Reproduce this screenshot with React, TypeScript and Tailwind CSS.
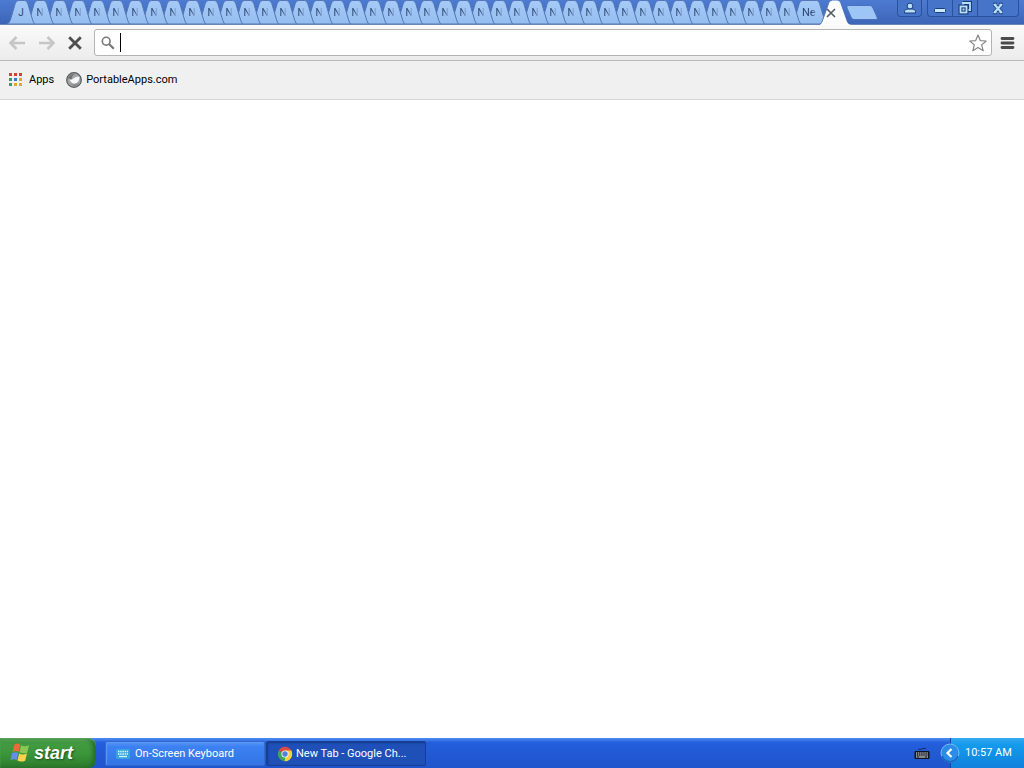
import { useState } from "react";
import type { ReactNode } from "react";

const tabs = ["J", ...Array.from({ length: 42 }, () => "N")];

const appColours = [
  "#d2402e", "#d2402e", "#d2402e",
  "#2f9e77", "#3c78c8", "#e3a52c",
  "#2f9e77", "#e3a52c", "#e3a52c",
];

function BackgroundTab({ label, index }: { label: string; index: number }) {
  const pitch = index < 10 ? "w-[19px]" : "w-[18px]";
  return (
    <li className={`relative h-6 shrink-0 ${pitch}`} style={{ zIndex: 60 - index }}>
      <button type="button" className="relative block h-6 w-7">
        <svg viewBox="0 0 28 24" className="absolute inset-0 h-6 w-7" aria-hidden="true">
          <path
            d="M0 24C2 23.500 3 21 4 18L7.500 6C8.500 2 10 .5 12 .5H17C19 .5 20.500 2 21.500 6L25 18C26 21 26.500 23.500 28 24Z"
            fill="url(#tabFill)"
            stroke="#5577b4"
            strokeWidth="1"
          />
        </svg>
        <span
          className={`relative ml-[10px] block w-2 pt-[2px] text-center text-[10px] leading-[22px] text-[#2c4672] ${
            index === 0 ? "" : "[mask-image:linear-gradient(to_right,black_45%,transparent_95%)]"
          }`}
        >
          {label}
        </span>
      </button>
    </li>
  );
}

function TabStrip() {
  return (
    <ul className="flex h-6 items-end pl-[7px]">
      {tabs.map((label, i) => (
        <BackgroundTab key={i} label={label} index={i} />
      ))}
      <li className="relative z-10 h-6 w-7 shrink-0">
        <button type="button" className="relative block h-6 w-9">
          <svg viewBox="0 0 36 24" className="absolute inset-0 h-6 w-9" aria-hidden="true">
            <path
              d="M0 24C2 23.500 3 21 4 18L7.500 6C8.500 2 10 .5 12 .5H25C27 .5 28 1.500 29 5L33 18C34 21 34.500 23.500 36 24Z"
              fill="url(#tabFill)"
              stroke="#5577b4"
            />
          </svg>
          <span className="relative ml-[11px] block w-4 pt-[2px] text-left text-[11px] leading-[22px] text-[#2c4672] [mask-image:linear-gradient(to_right,black_60%,transparent)]">
            Ne
          </span>
        </button>
      </li>
      <li className="relative z-[70] h-6 w-[27px] shrink-0">
        <svg viewBox="0 0 32 25" className="absolute top-0 left-0 h-[25px] w-8" aria-hidden="true">
          <path
            d="M0 25C2 24.500 3 22 4 19L9 5C10 1.500 11 .5 13 .5H18C20 .5 21 1.500 22 5L27 19C28 22 29 24.500 32 25Z"
            fill="#fbfcfd"
          />
          <path d="M0 24.500C2 24.500 3 22 4 19L9 5C10 1.500 11 .5 13 .5" fill="none" stroke="#5577b4" />
        </svg>
        <button type="button" aria-label="Close tab" className="relative mt-[7px] ml-[6px] block h-3 w-3">
          <svg viewBox="0 0 12 12" className="h-3 w-3" aria-hidden="true">
            <path d="M2 2L10 10M10 2L2 10" stroke="#555a60" strokeWidth="1.600" />
          </svg>
        </button>
      </li>
      <li className="mb-1 h-[15px] w-8 shrink-0">
        <button type="button" aria-label="Open a new tab" className="block h-[15px] w-8">
          <svg viewBox="0 0 32 15" className="h-[15px] w-8" aria-hidden="true">
            <path
              d="M2.500 .5H23C25 .5 26 1 27 3L31 12C31.500 14 31 14.500 30 14.500H8C6.500 14.500 5.500 13.500 5 12L1 3C.5 1.500 1 .5 2.500 .5Z"
              fill="#9dc5f5"
              stroke="#4a70bd"
            />
          </svg>
        </button>
      </li>
    </ul>
  );
}

function CaptionButton({ label, className, children }: { label: string; className: string; children: ReactNode }) {
  return (
    <button
      type="button"
      aria-label={label}
      className={`flex h-[17px] items-center justify-center border-b border-[#2c509a] bg-[#4674c9] ${className}`}
    >
      {children}
    </button>
  );
}

function WindowControls() {
  return (
    <div className="flex items-start pr-[5px]">
      <CaptionButton label="Switch person" className="w-[25px] rounded-b border-x">
        <svg viewBox="0 0 14 14" className="h-[14px] w-[14px]" aria-hidden="true">
          <path d="M1.500 12V10.500C1.500 8.800 3.500 8.300 5 8H9C10.500 8.300 12.500 8.800 12.500 10.500V12Z" fill="#b9e0fb" stroke="#1b3b7a" />
          <circle cx="7" cy="5" r="2.900" fill="#b9e0fb" stroke="#1b3b7a" />
        </svg>
      </CaptionButton>
      <div className="ml-[5px] flex">
        <CaptionButton label="Minimize" className="w-[26px] rounded-bl border-x">
          <svg viewBox="0 0 14 14" className="h-[14px] w-[14px]" aria-hidden="true">
            <rect x="1.500" y="7.500" width="11" height="4" rx="1" fill="#c8e9ff" stroke="#1b3b7a" />
          </svg>
        </CaptionButton>
        <CaptionButton label="Restore" className="w-[25px] border-r">
          <svg viewBox="0 0 14 14" className="h-[14px] w-[14px]" aria-hidden="true">
            <path d="M5 2H12V9H10" fill="none" stroke="#1b3b7a" strokeWidth="4" />
            <path d="M5 5V2H12V9H10" fill="none" stroke="#b9e0fb" strokeWidth="1.800" />
            <rect x="2.500" y="5.500" width="6" height="6" fill="none" stroke="#1b3b7a" strokeWidth="4" />
            <rect x="2.500" y="5.500" width="6" height="6" fill="#1b3b7a" stroke="#b9e0fb" strokeWidth="1.800" />
            <rect x="4.500" y="7.500" width="2" height="2" fill="#b9e0fb" />
          </svg>
        </CaptionButton>
        <CaptionButton label="Close" className="w-[41px] rounded-br border-r">
          <svg viewBox="0 0 14 14" className="h-[14px] w-[14px]" aria-hidden="true">
            <path d="M3.500 3.500L10.500 11.500M10.500 3.500L3.500 11.500M2 3.500H6M8 3.500H12M2 11.500H6M8 11.500H12" stroke="#1b3b7a" strokeWidth="3.600" />
            <path d="M3.500 3.500L10.500 11.500M10.500 3.500L3.500 11.500" stroke="#b9e0fb" strokeWidth="2.200" />
            <path d="M2.500 3.500H5.500M8.500 3.500H11.500M2.500 11.500H5.500M8.500 11.500H11.500" stroke="#b9e0fb" strokeWidth="1.400" />
          </svg>
        </CaptionButton>
      </div>
    </div>
  );
}

function ArrowIcon({ flipped }: { flipped?: boolean }) {
  return (
    <svg viewBox="0 0 18 16" className="h-4 w-[18px]" aria-hidden="true">
      <path
        d={flipped ? "M1 8H15M9.500 2L15.500 8L9.500 14" : "M17 8H3M8.500 2L2.500 8L8.500 14"}
        fill="none"
        stroke="#c6c6c6"
        strokeWidth="2.600"
      />
    </svg>
  );
}

function Toolbar() {
  const [address, setAddress] = useState("");
  return (
    <div className="flex h-9 items-center border-b border-[#b9b9b9] bg-linear-to-b from-[#fafafa] to-[#ececec] pr-2 pl-2">
      <button type="button" aria-label="Back" className="mr-3 block">
        <ArrowIcon />
      </button>
      <button type="button" aria-label="Forward" className="mr-3 block">
        <ArrowIcon flipped />
      </button>
      <button type="button" aria-label="Stop loading" className="mr-3 block">
        <svg viewBox="0 0 14 14" className="h-[14px] w-[14px]" aria-hidden="true">
          <path d="M1.200 1.200L12.800 12.800M12.800 1.200L1.200 12.800" stroke="#4e4e4e" strokeWidth="2.800" />
        </svg>
      </button>
      <div className="flex h-[27px] min-w-0 grow items-center rounded-[3px] border border-[#b4b4b4] bg-white pr-1 pl-[6px]">
        <svg viewBox="0 0 14 14" className="mr-[5px] h-[14px] w-[14px] shrink-0" aria-hidden="true">
          <circle cx="5.200" cy="5.200" r="3.900" fill="none" stroke="#777" strokeWidth="1.600" />
          <path d="M8.300 8.300L12.800 12.800" stroke="#777" strokeWidth="2.200" />
        </svg>
        <span className="h-[19px] w-px shrink-0 bg-black" />
        <input
          type="text"
          aria-label="Address and search bar"
          value={address}
          onChange={(e) => setAddress(e.target.value)}
          className="h-5 min-w-0 grow bg-transparent text-sm outline-none"
        />
        <button type="button" aria-label="Bookmark this page" className="block shrink-0">
          <svg viewBox="0 0 18 18" className="h-[18px] w-[18px]" aria-hidden="true">
            <path
              d="M9 1L11.300 6.600L17.200 7L12.700 10.900L14.200 16.800L9 13.600L3.800 16.800L5.300 10.900L.8 7L6.700 6.600Z"
              fill="#fff"
              stroke="#858585"
              strokeWidth="1.200"
              strokeLinejoin="round"
            />
          </svg>
        </button>
      </div>
      <button type="button" aria-label="Menu" className="ml-2 block">
        <svg viewBox="0 0 16 14" className="h-[14px] w-4" aria-hidden="true">
          <path d="M2 2.500H13M2 7H13M2 11.500H13" stroke="#4c4c4c" strokeWidth="2.800" strokeLinecap="round" />
        </svg>
      </button>
    </div>
  );
}

function BookmarksBar() {
  return (
    <nav aria-label="Bookmarks" className="flex h-[39px] items-center gap-3 border-b border-[#d6d6d6] bg-[#f0f0f0] px-[9px] text-[11px] text-black">
      <a href="#apps" className="flex items-center gap-[6px]">
        <svg viewBox="0 0 14 14" className="h-[14px] w-[14px]" aria-hidden="true">
          {appColours.map((colour, i) => (
            <rect key={i} x={(i % 3) * 5} y={Math.floor(i / 3) * 5} width="3" height="3" fill={colour} />
          ))}
        </svg>
        <span className="pt-px">Apps</span>
      </a>
      <a href="#portableapps" className="flex items-center gap-1">
        <svg viewBox="0 0 16 16" className="h-4 w-4" aria-hidden="true">
          <circle cx="8" cy="8" r="7.300" fill="#a4a7a7" stroke="#555b5a" strokeWidth="1.200" />
          <path d="M2 6C3 3 6 1.500 9 2C6.500 3 5.500 5 6 7C4.500 7.500 3 7 2 6Z" fill="#707675" />
          <path d="M3.500 7.500C5.500 8.500 7 7 9 5.500C11 4.500 12.500 5 13.300 4.500C14 8 11.500 11.500 8.500 11.500C6 11.500 4.300 9.500 3.500 7.500Z" fill="#f6f8f7" />
          <path d="M4 11.500C7 13.500 10.500 13 13 10.500C12 14 7 15.500 4 11.500Z" fill="#7b8180" />
        </svg>
        <span className="pt-px">PortableApps.com</span>
      </a>
    </nav>
  );
}

function WindowsFlag() {
  return (
    <svg viewBox="0 0 20 20" className="h-5 w-5" aria-hidden="true">
      <path d="M4.500 1.500C6.500 0 8.500 .2 10.200 1.500L8.600 8.800C6.700 7.800 4.700 7.800 2.500 9Z" fill="#ee6a38" />
      <path d="M11 2.200C13 3.500 16 3.500 19 2.200L17.200 9.700C14.500 10.700 11.500 10.500 9.400 9.300Z" fill="#8cc653" />
      <path d="M2.200 10C4.500 9 6.500 9 8.300 10L6.600 17C4.800 16 2.800 16 .3 17Z" fill="#638fe9" />
      <path d="M9.200 10.500C11.400 11.800 14.200 11.700 16.900 10.600L15.200 17.700C12.500 19 9.500 18.800 7.400 17.600Z" fill="#fbd34e" />
    </svg>
  );
}

function ChromeIcon() {
  return (
    <svg viewBox="0 0 16 16" className="h-4 w-4 shrink-0" aria-hidden="true">
      <path d="M8 8L1.800 4.400A7.200 7.200 0 0 1 14.200 4.400Z" fill="#df4b3c" />
      <path d="M8 8L14.200 4.400A7.200 7.200 0 0 1 8 15.200Z" fill="#f6cf45" />
      <path d="M8 8V15.200A7.200 7.200 0 0 1 1.800 4.400Z" fill="#42a35a" />
      <path d="M8 4.600H14.200A7.200 7.200 0 0 1 7.500 15.200L11 9.700Z" fill="#f6cf45" />
      <circle cx="8" cy="8" r="3.600" fill="#f5f5f5" />
      <circle cx="8" cy="8" r="2.700" fill="#4b83dd" />
    </svg>
  );
}

function Taskbar() {
  return (
    <footer className="flex h-[30px] shrink-0 items-stretch bg-linear-to-b from-[#4f8df0] via-[#245edb] via-15% to-[#1f55cc] text-[11px] text-white">
      <button
        type="button"
        className="flex w-24 items-center gap-1 rounded-r-lg border-t border-[#5ea45b] bg-linear-to-b from-[#459b45] via-[#3b963a] to-[#2d7a2b] pb-px pl-[10px] shadow-[inset_-3px_0_4px_#236b28,inset_0_2px_2px_#68b464]"
      >
        <WindowsFlag />
        <span className="font-['Liberation_Sans',sans-serif] text-[18px] leading-6 font-bold italic [text-shadow:1px_1px_2px_#1d4d1c]">
          start
        </span>
      </button>
      <div className="ml-[9px] flex grow gap-px pt-[3px] pb-[2px]">
        <button
          type="button"
          className="flex w-40 items-center gap-1 rounded-[2px] border border-[#3468cd] bg-linear-to-b from-[#5794f6] via-[#3c81f3] via-20% to-[#3474e4] pl-[9px] shadow-[inset_1px_1px_1px_#5f97f5]"
        >
          <svg viewBox="0 0 16 16" className="h-4 w-4" aria-hidden="true">
            <rect x="1" y="3" width="14" height="10" rx="1" fill="#37a4df" />
            <path d="M3 5.500H13M3 8H13" stroke="#d5f6ff" strokeWidth="1.500" strokeDasharray="1.500 .7" />
            <path d="M4 10.500H12" stroke="#d5f6ff" strokeWidth="1.300" />
          </svg>
          <span className="pt-px">On-Screen Keyboard</span>
        </button>
        <button
          type="button"
          className="flex w-40 items-center gap-[3px] rounded-[2px] border border-[#183f95] bg-[#1e50b8] pt-px pl-[10px] shadow-[inset_1px_1px_2px_#153a87]"
        >
          <ChromeIcon />
          <span className="pt-px">New Tab - Google Ch...</span>
        </button>
      </div>
      <div className="flex items-center">
        <svg viewBox="0 0 16 16" className="h-4 w-4" aria-hidden="true">
          <path d="M4 5C5 3 6 5 8 4S10 3 12 4" fill="none" stroke="#16275c" />
          <rect x=".5" y="6" width="15" height="8" rx="1" fill="#10131c" />
          <path d="M2 8H14M2 10H14" stroke="#fff" strokeWidth="1.200" strokeDasharray="1.300 .8" />
          <path d="M2 12H3.500M4.500 12H11.500M12.500 12H14" stroke="#fff" strokeWidth="1.200" />
        </svg>
      </div>
      <div className="relative ml-5 flex w-[74px] items-center border-l border-[#164696] bg-linear-to-b from-[#35aaf2] via-[#149bec] via-20% to-[#1181dc] pl-[14px]">
        <button type="button" aria-label="Show hidden icons" className="absolute top-[5px] -left-[11px] block">
          <svg viewBox="0 0 20 20" className="h-5 w-5" aria-hidden="true">
            <circle cx="10" cy="10" r="9" fill="#2c8de8" stroke="#78bbf3" />
            <path d="M2 13A8.500 8.500 0 0 0 18 13" fill="none" stroke="#1765bd" strokeWidth="1.500" />
            <path d="M11.500 6L7.500 10L11.500 14" fill="none" stroke="#fff" strokeWidth="2.200" />
          </svg>
        </button>
        <time className="pt-px whitespace-nowrap">10:57 AM</time>
      </div>
    </footer>
  );
}

export default function App() {
  return (
    <div className="flex min-h-screen flex-col bg-white font-['Roboto','DejaVu_Sans',sans-serif]">
      <header>
        <div className="flex h-[25px] justify-between border-b border-[#6886b8] bg-linear-to-b from-[#4d7bd2] to-[#3d65b7]">
          <svg className="absolute h-0 w-0" aria-hidden="true">
            <defs>
              <linearGradient id="tabFill" x1="0" y1="0" x2="0" y2="1">
                <stop offset="0" stopColor="#a6cbf7" />
                <stop offset="1" stopColor="#94bdf0" />
              </linearGradient>
            </defs>
          </svg>
          <TabStrip />
          <WindowControls />
        </div>
        <Toolbar />
        <BookmarksBar />
      </header>
      <main className="grow bg-white" />
      <Taskbar />
    </div>
  );
}
